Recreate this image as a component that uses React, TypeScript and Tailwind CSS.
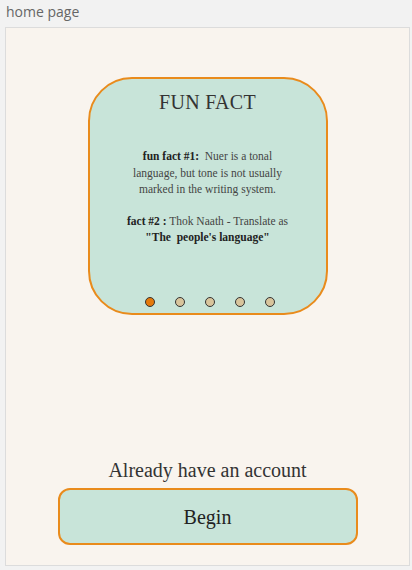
export default function App() {
  const dots = [true, false, false, false, false]
  return (
    <main className="w-[412px] h-[570px] bg-[#f2f2f2] relative overflow-hidden">
      <div className="pl-[6px] pt-[3px] h-[27px] text-[14px] leading-[18px] text-[#666] font-['Open_Sans',sans-serif]">
        home page
      </div>
      <div className="ml-[5px] w-[405px] h-[539px] border border-[#dcdcdc] bg-[#f9f4ee] flex flex-col items-center font-['Liberation_Serif',serif]">
        <div className="mt-[49px] w-[240px] h-[238px] rounded-[44px] border-2 border-[#e98b1c] bg-[#c8e4d9] flex flex-col items-center">
          <h1 className="mt-[10px] text-[20px] leading-[26px] text-[#333] tracking-[0.3px]">FUN FACT</h1>
          <div className="mt-[33px] text-center text-[11.5px] leading-[16.5px] text-[#444] whitespace-nowrap">
            <p>
              <b className="text-[#222]">fun fact #1:</b>&nbsp; Nuer is a tonal
              <br />
              language, but tone is not usually
              <br />
              marked in the writing system.
            </p>
            <p className="mt-[15px]">
              <b className="text-[#222]">fact #2 :</b> Thok Naath - Translate as
              <br />
              <b className="text-[#222]">"The&nbsp; people's language"</b>
            </p>
          </div>
          <div className="mt-auto mb-[6px] ml-[4px] flex gap-[20px]">
            {dots.map((on, i) => (
              <span
                key={i}
                className={`w-[10px] h-[10px] rounded-full border border-[#333] ${on ? "bg-[#e57a0c]" : "bg-[#d8c49c]"}`}
              />
            ))}
          </div>
        </div>
        <div className="flex-1" />
        <p className="text-[20px] leading-[26px] text-[#333]">Already have an account</p>
        <button className="mt-[5px] mb-[20px] w-[300px] h-[57px] rounded-[12px] border-2 border-[#e98b1c] bg-[#c8e4d9] text-[20px] text-[#222] font-['Liberation_Serif',serif]">
          Begin
        </button>
      </div>
    </main>
  )
}
